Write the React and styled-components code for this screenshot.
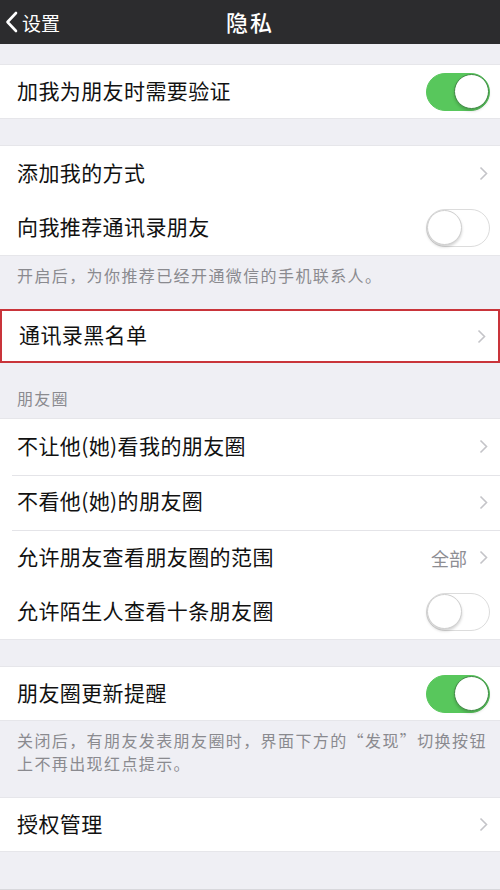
import styled, { createGlobalStyle } from "styled-components";

const GlobalStyle = createGlobalStyle`
  html, body {
    margin: 0;
    padding: 0;
    background: #efeff4;
  }
  body {
    font-family: "Noto Sans CJK SC", "Noto Sans", sans-serif;
    color: #111;
  }
`;

const Page = styled.div`
  width: 500px;
  height: 890px;
  background: #efeff4;
  overflow: hidden;
  display: flex;
  flex-direction: column;
  border-bottom: 1px solid #d8d8dc;
  box-sizing: border-box;
`;

const NavBar = styled.div`
  height: 44px;
  background: #2c2c2e;
  display: grid;
  grid-template-columns: 1fr auto 1fr;
  align-items: center;
  flex-shrink: 0;
`;

const BackButton = styled.div`
  display: flex;
  align-items: center;
  gap: 4px;
  padding-left: 5px;
  color: #fff;
  font-size: 19px;
`;

const Title = styled.div`
  color: #fff;
  font-size: 22px;
  font-weight: 500;
  letter-spacing: 2px;
  padding-bottom: 3px;
`;

const Gap = styled.div`
  height: ${(p) => p.$h}px;
  flex-shrink: 0;
`;

const Section = styled.div`
  background: #fff;
  flex-shrink: 0;
  border-top: 1px solid #e6e6ea;
  border-bottom: 1px solid #e6e6ea;
  ${(p) =>
    p.$marked &&
    `
    border: 2px solid #c9343a;
  `}
`;

const Row = styled.div`
  height: ${(p) => p.$h || 55}px;
  box-sizing: border-box;
  display: flex;
  align-items: center;
  padding-left: 17px;
  position: relative;

  & + &::before {
    content: "";
    position: absolute;
    top: 0;
    left: 12px;
    right: 0;
    border-top: 1px solid #e4e4e8;
  }
`;

const Label = styled.div`
  flex: 1;
  font-size: 21px;
  line-height: 26px;
  padding-bottom: 4px;
  letter-spacing: 0.4px;
  color: #111;
`;

const Trail = styled.div`
  display: flex;
  align-items: center;
  gap: 12px;
  padding-right: ${(p) => (p.$toggle ? 10 : 12)}px;
`;

const Value = styled.span`
  font-size: 18px;
  color: #8e8e93;
`;

const Track = styled.div`
  width: 64px;
  height: 38px;
  border-radius: 19px;
  box-sizing: border-box;
  position: relative;
  background: ${(p) => (p.$on ? "#58c75c" : "#fff")};
  border: 1.5px solid ${(p) => (p.$on ? "#58c75c" : "#dcdcdc")};
`;

const Knob = styled.div`
  position: absolute;
  top: 0;
  ${(p) => (p.$on ? "right: 0;" : "left: 0;")}
  width: 35px;
  height: 35px;
  border-radius: 50%;
  background: #fff;
  box-sizing: border-box;
  border: 1px solid ${(p) => (p.$on ? "#3f8a44" : "#cfcfcf")};
  box-shadow: 0 2px 3px rgba(0, 0, 0, 0.18);
`;

const Note = styled.div`
  height: ${(p) => p.$h}px;
  box-sizing: border-box;
  padding: 8px 8px 0 17px;
  font-size: 16px;
  line-height: 23px;
  letter-spacing: 1.4px;
  color: #8a8a8f;
  flex-shrink: 0;
`;

const Header = styled.div`
  height: 55px;
  box-sizing: border-box;
  display: flex;
  align-items: flex-end;
  padding: 0 0 8px 17px;
  font-size: 16px;
  letter-spacing: 1.2px;
  color: #8a8a8f;
  flex-shrink: 0;
`;

function Chevron() {
  return (
    <svg width="9" height="15" viewBox="0 0 9 15">
      <polyline
        points="1.5,1.5 7.5,7.5 1.5,13.5"
        fill="none"
        stroke="#c4c4c8"
        strokeWidth="1.6"
      />
    </svg>
  );
}

function BackChevron() {
  return (
    <svg width="13" height="22" viewBox="0 0 13 22">
      <polyline
        points="11,2 2.5,11 11,20"
        fill="none"
        stroke="#fff"
        strokeWidth="2.6"
        strokeLinecap="round"
        strokeLinejoin="round"
      />
    </svg>
  );
}

function Toggle({ on }) {
  return (
    <Track $on={on}>
      <Knob $on={on} />
    </Track>
  );
}

function Item({ label, value, toggle, on, h }) {
  return (
    <Row $h={h}>
      <Label>{label}</Label>
      <Trail $toggle={toggle}>
        {value && <Value>{value}</Value>}
        {toggle ? <Toggle on={on} /> : <Chevron />}
      </Trail>
    </Row>
  );
}

export default function App() {
  return (
    <>
      <GlobalStyle />
      <Page>
        <NavBar>
          <BackButton>
            <BackChevron />
            设置
          </BackButton>
          <Title>隐私</Title>
          <div />
        </NavBar>

        <Gap $h={20} />
        <Section>
          <Item label="加我为朋友时需要验证" toggle on h={53} />
        </Section>

        <Gap $h={26} />
        <Section>
          <Item label="添加我的方式" />
          <Item label="向我推荐通讯录朋友" toggle on={false} h={54} />
        </Section>
        <Note $h={53}>开启后，为你推荐已经开通微信的手机联系人。</Note>

        <Section $marked>
          <Item label="通讯录黑名单" h={50} />
        </Section>

        <Header>朋友圈</Header>
        <Section>
          <Item label="不让他(她)看我的朋友圈" h={55.5} />
          <Item label="不看他(她)的朋友圈" h={55.5} />
          <Item label="允许朋友查看朋友圈的范围" value="全部" h={55.5} />
          <Item label="允许陌生人查看十条朋友圈" toggle on={false} h={53.5} />
        </Section>

        <Gap $h={26} />
        <Section>
          <Item label="朋友圈更新提醒" toggle on h={53} />
        </Section>
        <Note $h={76}>
          关闭后，有朋友发表朋友圈时，界面下方的“发现”切换按钮上不再出现红点提示。
        </Note>

        <Section>
          <Item label="授权管理" h={53} />
        </Section>
      </Page>
    </>
  );
}
